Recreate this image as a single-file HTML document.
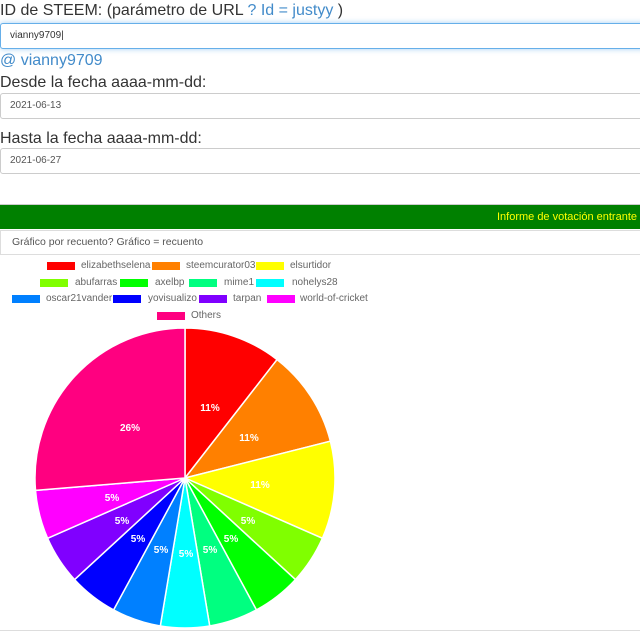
<!DOCTYPE html>
<html><head><meta charset="utf-8"><style>
body{margin:0;width:640px;height:631px;overflow:hidden;background:#fff;font-family:"Liberation Sans",sans-serif;position:relative}
.a{position:absolute;white-space:nowrap}
.h{font-size:16px;color:#333}
.inp{position:absolute;left:0;width:650px;border:1px solid #ccc;border-radius:3px;box-sizing:border-box;font-size:10px;color:#555;padding-left:9px;background:#fff}
.lg{position:absolute;font-size:10px;color:#666;white-space:nowrap}
.bx{position:absolute;width:28px;height:8px}
</style></head><body>
<div class="a h" style="left:0;top:2px">ID de STEEM: (parámetro de URL <span style="color:#428bca">? Id = justyy</span> )</div>
<div class="inp" style="top:23px;height:26px;line-height:24px;border-color:#66afe9;box-shadow:0 0 6px rgba(102,175,233,.6);color:#333">vianny9709|</div>
<div class="a" style="left:0;top:52px;font-size:16px;color:#428bca">@ vianny9709</div>
<div class="a h" style="left:0;top:74px">Desde la fecha aaaa-mm-dd:</div>
<div class="inp" style="top:93px;height:26px;line-height:24px">2021-06-13</div>
<div class="a h" style="left:0;top:130px">Hasta la fecha aaaa-mm-dd:</div>
<div class="inp" style="top:148px;height:26px;line-height:24px">2021-06-27</div>
<div class="a" style="left:0;top:204px;width:650px;height:25px;background:#008000;border-top:1px solid #ccc;box-sizing:border-box"></div>
<div class="a" style="right:3px;top:211px;font-size:11px;color:#ff0">Informe de votación entrante</div>
<div class="a" style="left:0;top:230px;width:650px;height:25px;border:1px solid #ddd;box-sizing:border-box"></div>
<div class="a" style="left:12px;top:236px;font-size:10.5px;color:#555">Gráfico por recuento? Gráfico = recuento</div>

<div class="bx" style="left:47px;top:262px;background:#f00"></div><div class="lg" style="left:81px;top:260px">elizabethselena</div>
<div class="bx" style="left:152px;top:262px;background:#ff8000"></div><div class="lg" style="left:186px;top:260px">steemcurator03</div>
<div class="bx" style="left:256px;top:262px;background:#ff0"></div><div class="lg" style="left:290px;top:260px">elsurtidor</div>
<div class="bx" style="left:40px;top:279px;background:#80ff00"></div><div class="lg" style="left:75px;top:277px">abufarras</div>
<div class="bx" style="left:120px;top:279px;background:#0f0"></div><div class="lg" style="left:155px;top:277px">axelbp</div>
<div class="bx" style="left:189px;top:279px;background:#00ff80"></div><div class="lg" style="left:224px;top:277px">mime1</div>
<div class="bx" style="left:256px;top:279px;background:#0ff"></div><div class="lg" style="left:292px;top:277px">nohelys28</div>
<div class="bx" style="left:12px;top:295px;background:#0080ff"></div><div class="lg" style="left:46px;top:293px">oscar21vander</div>
<div class="bx" style="left:113px;top:295px;background:#00f"></div><div class="lg" style="left:148px;top:293px">yovisualizo</div>
<div class="bx" style="left:199px;top:295px;background:#8000ff"></div><div class="lg" style="left:233px;top:293px">tarpan</div>
<div class="bx" style="left:267px;top:295px;background:#f0f"></div><div class="lg" style="left:300px;top:293px">world-of-cricket</div>
<div class="bx" style="left:157px;top:312px;background:#ff0080"></div><div class="lg" style="left:191px;top:310px">Others</div>

<svg class="a" style="left:0;top:0" width="640" height="631">
<g stroke="#fff" stroke-width="1.5">
<path d="M185 478L185 328A150 150 0 0 1 277.1 359.6Z" fill="#f00"/>
<path d="M185 478L277.1 359.6A150 150 0 0 1 330.4 441.2Z" fill="#ff8000"/>
<path d="M185 478L330.4 441.2A150 150 0 0 1 322.4 538.3Z" fill="#ff0"/>
<path d="M185 478L322.4 538.3A150 150 0 0 1 295.4 579.6Z" fill="#80ff00"/>
<path d="M185 478L295.4 579.6A150 150 0 0 1 256.4 609.9Z" fill="#0f0"/>
<path d="M185 478L256.4 609.9A150 150 0 0 1 209.7 626Z" fill="#00ff80"/>
<path d="M185 478L209.7 626A150 150 0 0 1 160.3 626Z" fill="#0ff"/>
<path d="M185 478L160.3 626A150 150 0 0 1 113.6 609.9Z" fill="#0080ff"/>
<path d="M185 478L113.6 609.9A150 150 0 0 1 74.6 579.6Z" fill="#00f"/>
<path d="M185 478L74.6 579.6A150 150 0 0 1 47.6 538.3Z" fill="#8000ff"/>
<path d="M185 478L47.6 538.3A150 150 0 0 1 35.5 490.4Z" fill="#f0f"/>
<path d="M185 478L35.5 490.4A150 150 0 0 1 185 328Z" fill="#ff0080"/>
</g>
<g fill="#fff" font-size="10" font-weight="bold" text-anchor="middle" font-family="Liberation Sans,sans-serif">
<text x="210" y="411">11%</text><text x="249" y="441">11%</text><text x="260" y="488">11%</text>
<text x="248" y="524">5%</text><text x="231" y="542">5%</text><text x="210" y="553">5%</text>
<text x="186" y="557">5%</text><text x="161" y="553">5%</text><text x="138" y="542">5%</text>
<text x="122" y="524">5%</text><text x="112" y="501">5%</text><text x="130" y="431">26%</text>
</g>
<line x1="0" y1="630.5" x2="640" y2="630.5" stroke="#ddd"/>
</svg>
</body></html>
